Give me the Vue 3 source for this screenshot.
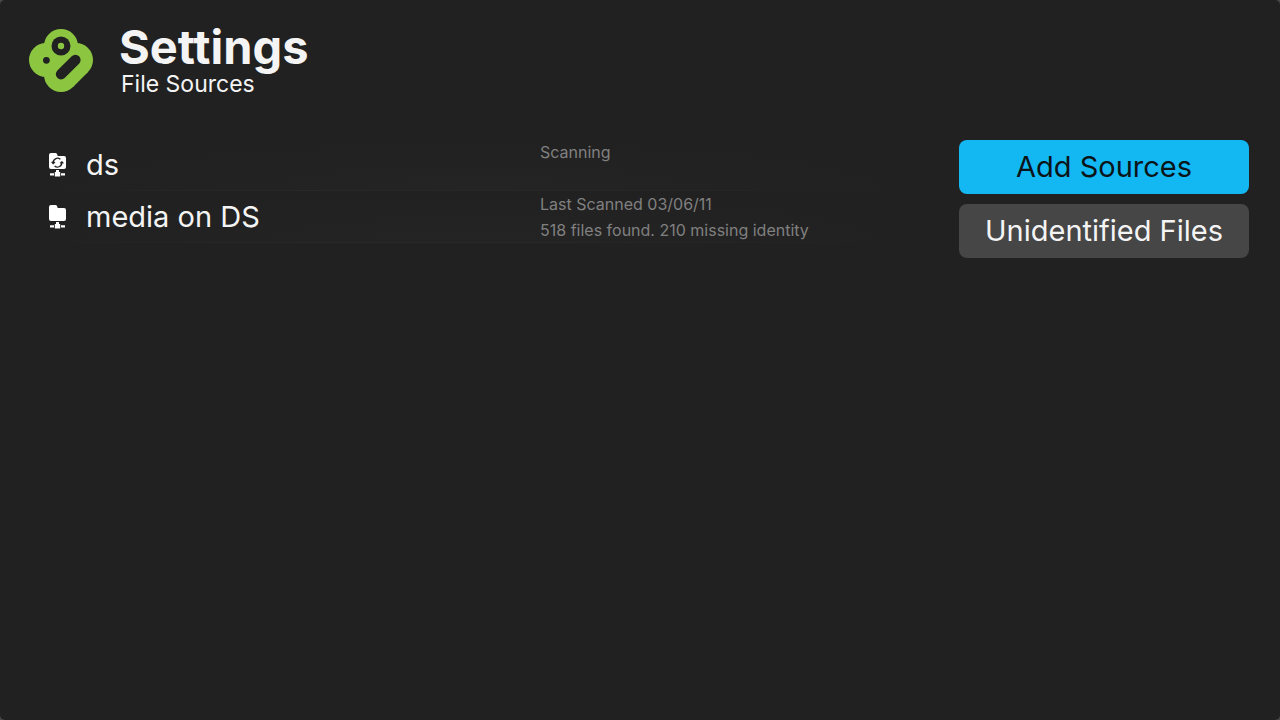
<script setup>
const sources = [
  { name: 'ds', scanning: true, details: ['Scanning'] },
  {
    name: 'media on DS',
    scanning: false,
    details: ['Last Scanned 03/06/11', '518 files found. 210 missing identity'],
  },
]
</script>

<template>
  <div class="screen">
    <header class="header">
      <svg class="logo" viewBox="29 28 64 63" aria-hidden="true">
        <g fill="#8cc641">
          <circle cx="61" cy="45" r="17" />
          <circle cx="46" cy="59" r="17" />
          <circle cx="76" cy="59" r="17" />
          <circle cx="61" cy="74" r="17" />
          <path d="M61 40L76 59L88 71L73 86L61 74L46 59Z" />
        </g>
        <circle cx="61" cy="45" r="9.5" fill="#212121" />
        <circle cx="61" cy="45" r="3.2" fill="#8cc641" />
        <circle cx="46.4" cy="59.3" r="3.4" fill="#212121" />
        <path d="M61 73.2L75.4 59" stroke="#212121" stroke-width="10.4" stroke-linecap="round" />
      </svg>
      <div class="titles">
        <h1>Settings</h1>
        <p>File Sources</p>
      </div>
    </header>

    <main class="content">
      <ul class="sources">
        <li v-for="source in sources" :key="source.name" class="source">
          <div class="identity">
            <svg class="folder" viewBox="0 0 18 24" aria-hidden="true">
              <path
                fill="#fff"
                d="M2 0H6.5Q8 0 8.3 1.5L8.6 3H15Q17 3 17 5V14Q17 16 15 16H2Q0 16 0 14V2Q0 0 2 0Z"
              />
              <path fill="#fff" d="M7 17H10V19H11.2V23.5H5.8V19H7ZM1 20.2H5V22.4H1ZM12 20.2H16V22.4H12Z" />
              <g v-if="source.scanning" fill="none" stroke="#222" stroke-width="1.3">
                <path d="M4.2 10.3A4.4 4.4 0 0 1 11.4 6.3M12.8 9A4.4 4.4 0 0 1 5.6 13" />
                <path d="M2.7 8.8L4.2 10.5L5.9 9M14.4 10.4L12.9 8.8L11.2 10.3" />
              </g>
            </svg>
            <span class="name">{{ source.name }}</span>
          </div>
          <div class="details">
            <p v-for="line in source.details" :key="line">{{ line }}</p>
          </div>
        </li>
      </ul>

      <nav class="actions" aria-label="Source actions">
        <button type="button" class="action primary">Add Sources</button>
        <button type="button" class="action">Unidentified Files</button>
      </nav>
    </main>
  </div>
</template>

<style>
body {
  margin: 0;
  background: #484848;
}
</style>

<style scoped>
.screen {
  box-sizing: border-box;
  min-height: 100vh;
  padding: 24px 31px 24px 29px;
  border-radius: 5px;
  background: #212121;
  color: #f4f4f4;
  font-family: Inter, "Liberation Sans", sans-serif;
}

.header {
  display: flex;
  align-items: center;
  gap: 26px;
  height: 72px;
}

.logo {
  width: 64px;
  height: 63px;
}

h1,
p {
  margin: 0;
}

h1 {
  font-size: 47px;
  line-height: 48px;
  font-weight: 700;
}

.titles p {
  padding-left: 2px;
  font-size: 23px;
  line-height: 26px;
}

.content {
  display: flex;
  align-items: flex-start;
  gap: 30px;
  margin-top: 43px;
}

.sources {
  flex: 1;
  margin: 0;
  padding: 0;
  list-style: none;
}

.source {
  display: grid;
  grid-template-columns: 511fr 389fr;
  min-height: 52px;
  background:
    linear-gradient(90deg, transparent, #282828 30%, #272727 60%, transparent 95%) bottom / 100% 1px no-repeat,
    radial-gradient(ellipse at bottom, #242424, transparent 70%);
}

.identity {
  display: flex;
  align-items: center;
  gap: 19px;
  padding-left: 20px;
}

.folder {
  width: 18px;
  height: 24px;
}

.name {
  font-size: 29px;
  line-height: 52px;
}

.details {
  color: #808080;
  font-size: 16px;
  line-height: 26px;
}

.actions {
  display: flex;
  flex-direction: column;
  gap: 10px;
  width: 290px;
  padding-top: 1px;
}

.action {
  height: 54px;
  padding: 0;
  border: 0;
  border-radius: 8px;
  background: #464646;
  color: #f4f4f4;
  font-family: inherit;
  font-size: 29px;
  line-height: 54px;
  cursor: pointer;
}

.primary {
  background: #13b8f3;
  color: #0b1418;
}
</style>
